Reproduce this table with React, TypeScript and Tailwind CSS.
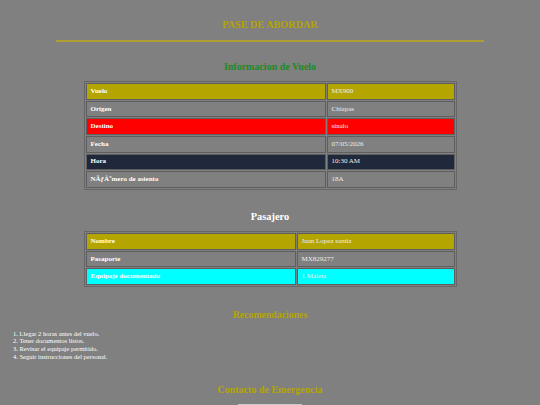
const vuelo = [
  { label: "Vuelo", value: "MX900", row: "bg-[#b5a500]" },
  { label: "Origen", value: "Chiapas", row: "" },
  { label: "Destino", value: "sinalo", row: "bg-[#ff0000]" },
  { label: "Fecha", value: "07/05/2026", row: "" },
  { label: "Hora", value: "10:30 AM", row: "bg-[#1f293b]" },
  { label: "NÃƒÂºmero de asiento", value: "18A", row: "" },
];

const pasajero = [
  { label: "Nombre", value: "Juan Lopez santiz", row: "bg-[#b5a500]" },
  { label: "Pasaporte", value: "MX829277", row: "" },
  { label: "Equipaje documentado", value: "1 Maleta", row: "bg-[#00ffff]" },
];

function InfoTable({ rows, first }: { rows: typeof vuelo; first: string }) {
  return (
    <table className="w-[373px] border border-[#666] border-separate border-spacing-[1px] text-[7px] leading-none">
      <tbody>
        {rows.map((r, i) => (
          <tr key={i} className={r.row}>
            <th className={`${first} h-[16.6px] border border-[#5e5e5e] px-[4px] text-left font-bold text-white`}>
              {r.label}
            </th>
            <td className="h-[16.6px] border border-[#5e5e5e] px-[4px] text-[#eee]">{r.value}</td>
          </tr>
        ))}
      </tbody>
    </table>
  );
}

export default function App() {
  return (
    <div className="h-[405px] overflow-hidden bg-[#808080] font-['Liberation_Serif',serif] flex flex-col items-center">
      <h1 className="mt-[20px] text-[10.2px] font-bold leading-none text-[#b5a500]">PASE DE ABORDAR</h1>
      <div className="mt-[10px] w-[428px] shrink-0 border-t-2 border-[#ad9f33]" />

      <h2 className="mt-[20px] text-[10px] font-bold leading-none text-[#1f8a1f]">Informacion de Vuelo</h2>
      <div className="mt-[9px]">
        <InfoTable rows={vuelo} first="w-[240px]" />
      </div>

      <h2 className="mt-[22px] text-[10.4px] font-bold leading-none text-white">Pasajero</h2>
      <div className="mt-[9px]">
        <InfoTable rows={pasajero} first="w-[210px]" />
      </div>

      <h2 className="mt-[23px] text-[9.8px] font-bold leading-none text-[#b5a500]">Recomendaciones</h2>
      <ol className="self-start mt-[10px] pl-[13px] text-[6.5px] leading-[7.7px] text-white">
        <li>1. Llegar 2 horas antes del vuelo.</li>
        <li>2. Tener documentos listos.</li>
        <li>3. Revisar el equipaje permitido.</li>
        <li>4. Seguir instrucciones del personal.</li>
      </ol>

      <h2 className="mt-[24px] text-[10px] font-bold leading-none text-[#b5a500]">Contacto de Emergencia</h2>
      <div className="mt-[9px] w-[64px] h-[4px] shrink-0 border-t border-[#c8c8c8]" />
    </div>
  );
}
